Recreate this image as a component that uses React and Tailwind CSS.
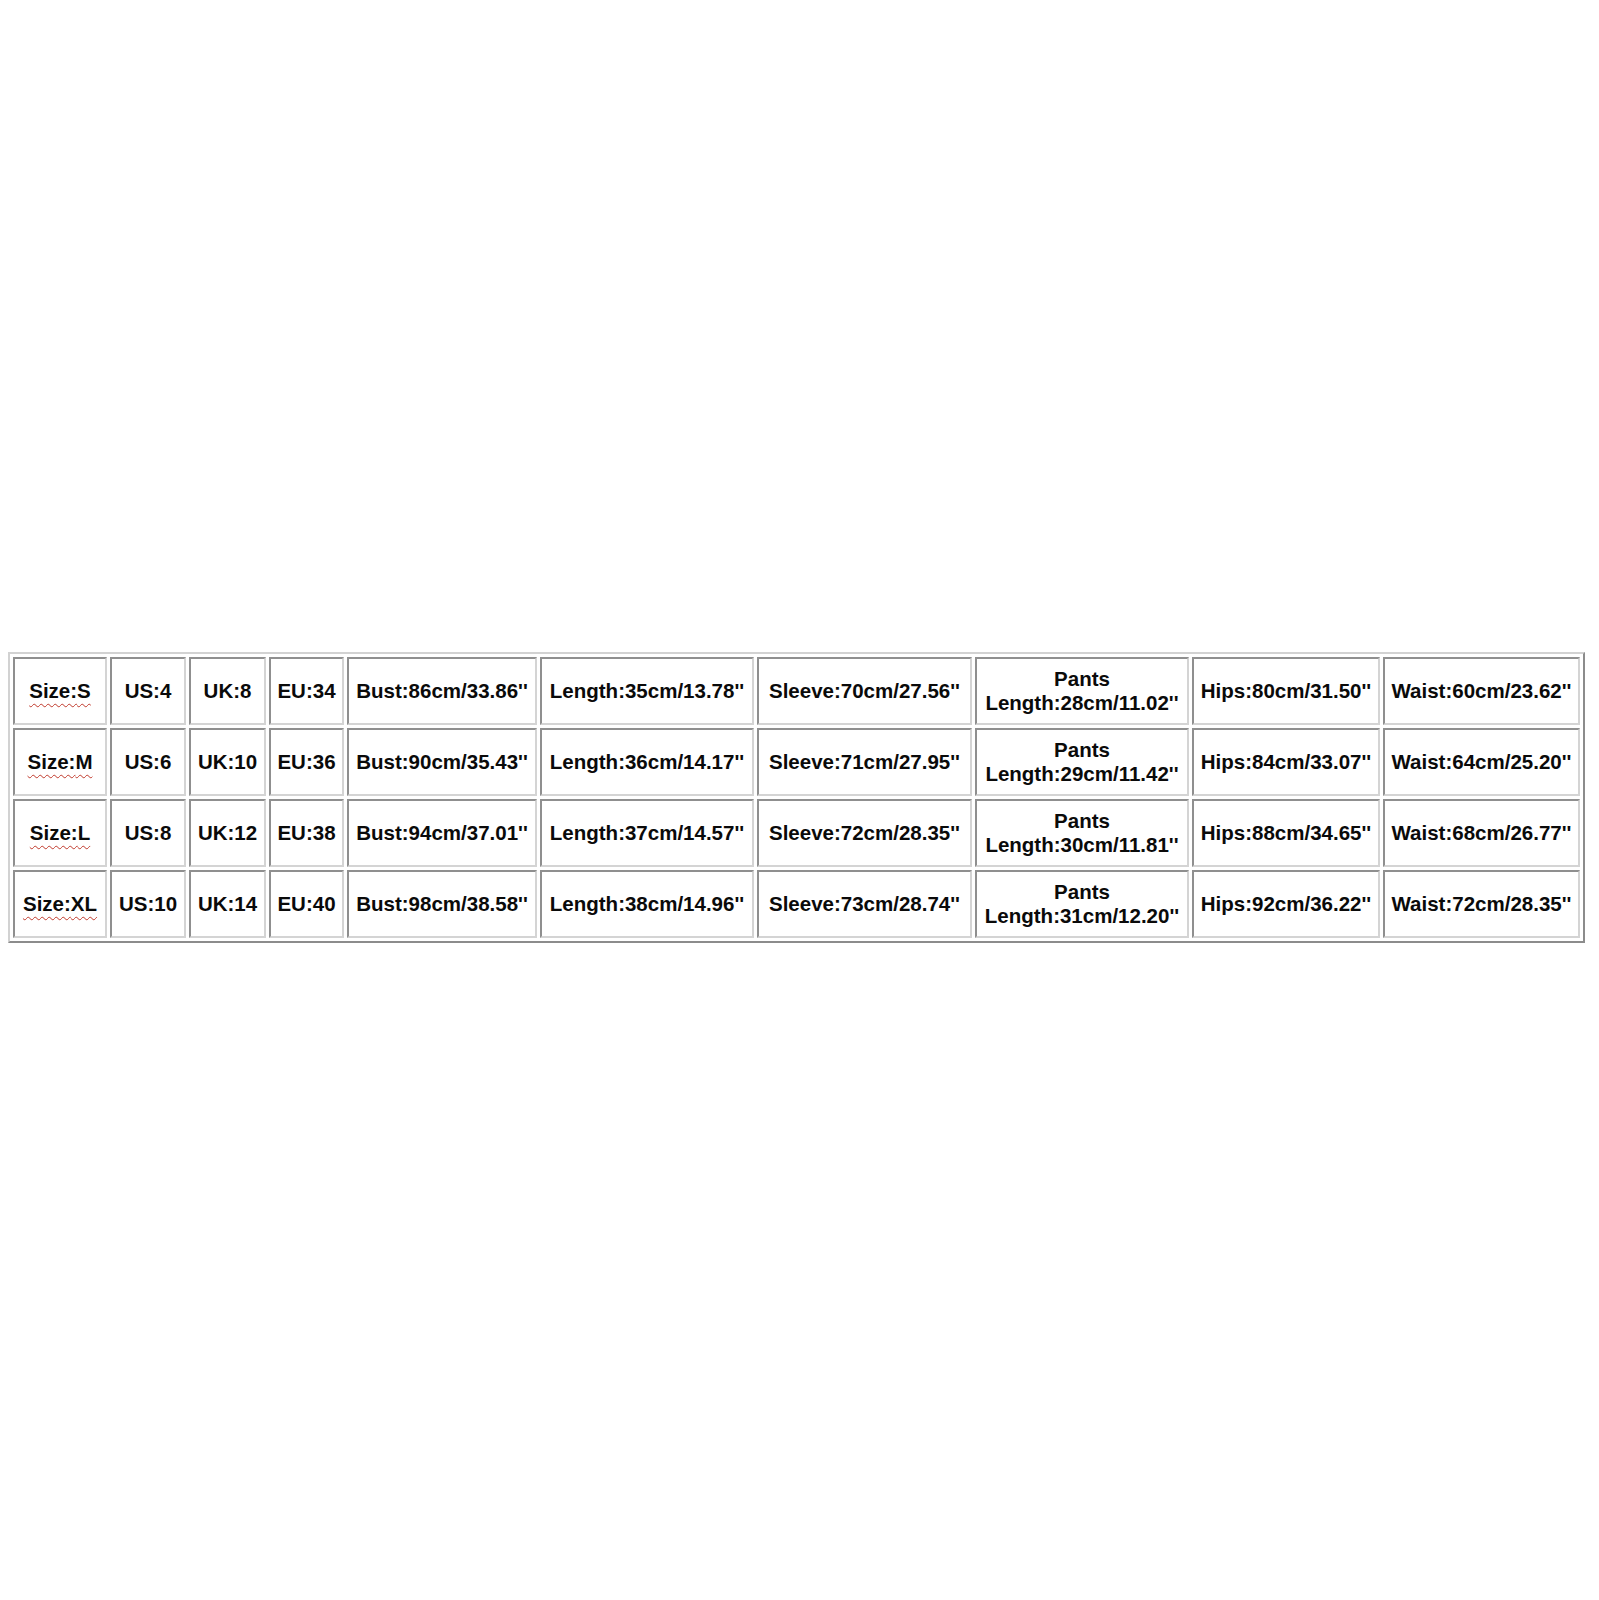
import React from "react";

const rows = [
  ["S", "US:4", "UK:8", "EU:34", "Bust:86cm/33.86''", "Length:35cm/13.78''", "Sleeve:70cm/27.56''", "Length:28cm/11.02''", "Hips:80cm/31.50''", "Waist:60cm/23.62''"],
  ["M", "US:6", "UK:10", "EU:36", "Bust:90cm/35.43''", "Length:36cm/14.17''", "Sleeve:71cm/27.95''", "Length:29cm/11.42''", "Hips:84cm/33.07''", "Waist:64cm/25.20''"],
  ["L", "US:8", "UK:12", "EU:38", "Bust:94cm/37.01''", "Length:37cm/14.57''", "Sleeve:72cm/28.35''", "Length:30cm/11.81''", "Hips:88cm/34.65''", "Waist:68cm/26.77''"],
  ["XL", "US:10", "UK:14", "EU:40", "Bust:98cm/38.58''", "Length:38cm/14.96''", "Sleeve:73cm/28.74''", "Length:31cm/12.20''", "Hips:92cm/36.22''", "Waist:72cm/28.35''"],
];

function Cell({ children }) {
  return (
    <div className="h-[68px] flex items-center justify-center text-center border-2 border-t-[#8f8f8f] border-l-[#8f8f8f] border-r-[#d4d4d4] border-b-[#d4d4d4] bg-white whitespace-nowrap">
      {children}
    </div>
  );
}

export default function App() {
  return (
    <div className="min-h-[1600px] w-full bg-white pt-[652px] pl-[8px]">
      <div
        className="inline-grid grid-cols-[94px_76px_77px_75px_190px_214px_215px_214px_188px_197px] gap-x-[3px] gap-y-[3px] p-[3px] border-2 border-t-[#d2d2d2] border-l-[#d2d2d2] border-r-[#8c8c8c] border-b-[#8c8c8c] text-[20.5px] font-bold leading-[24px] text-[#0a0a0a]"
        style={{ fontFamily: '"Liberation Sans", Arial, sans-serif' }}
      >
        {rows.map((r, i) => (
          <React.Fragment key={i}>
            <Cell>
              <span className="underline decoration-wavy decoration-[#c0392b] decoration-1 underline-offset-[5px]">
                Size:{r[0]}
              </span>
            </Cell>
            <Cell>{r[1]}</Cell>
            <Cell>{r[2]}</Cell>
            <Cell>{r[3]}</Cell>
            <Cell>{r[4]}</Cell>
            <Cell>{r[5]}</Cell>
            <Cell>{r[6]}</Cell>
            <Cell>
              <div className="flex flex-col items-center">
                <span>Pants</span>
                <span>{r[7]}</span>
              </div>
            </Cell>
            <Cell>{r[8]}</Cell>
            <Cell>{r[9]}</Cell>
          </React.Fragment>
        ))}
      </div>
    </div>
  );
}
